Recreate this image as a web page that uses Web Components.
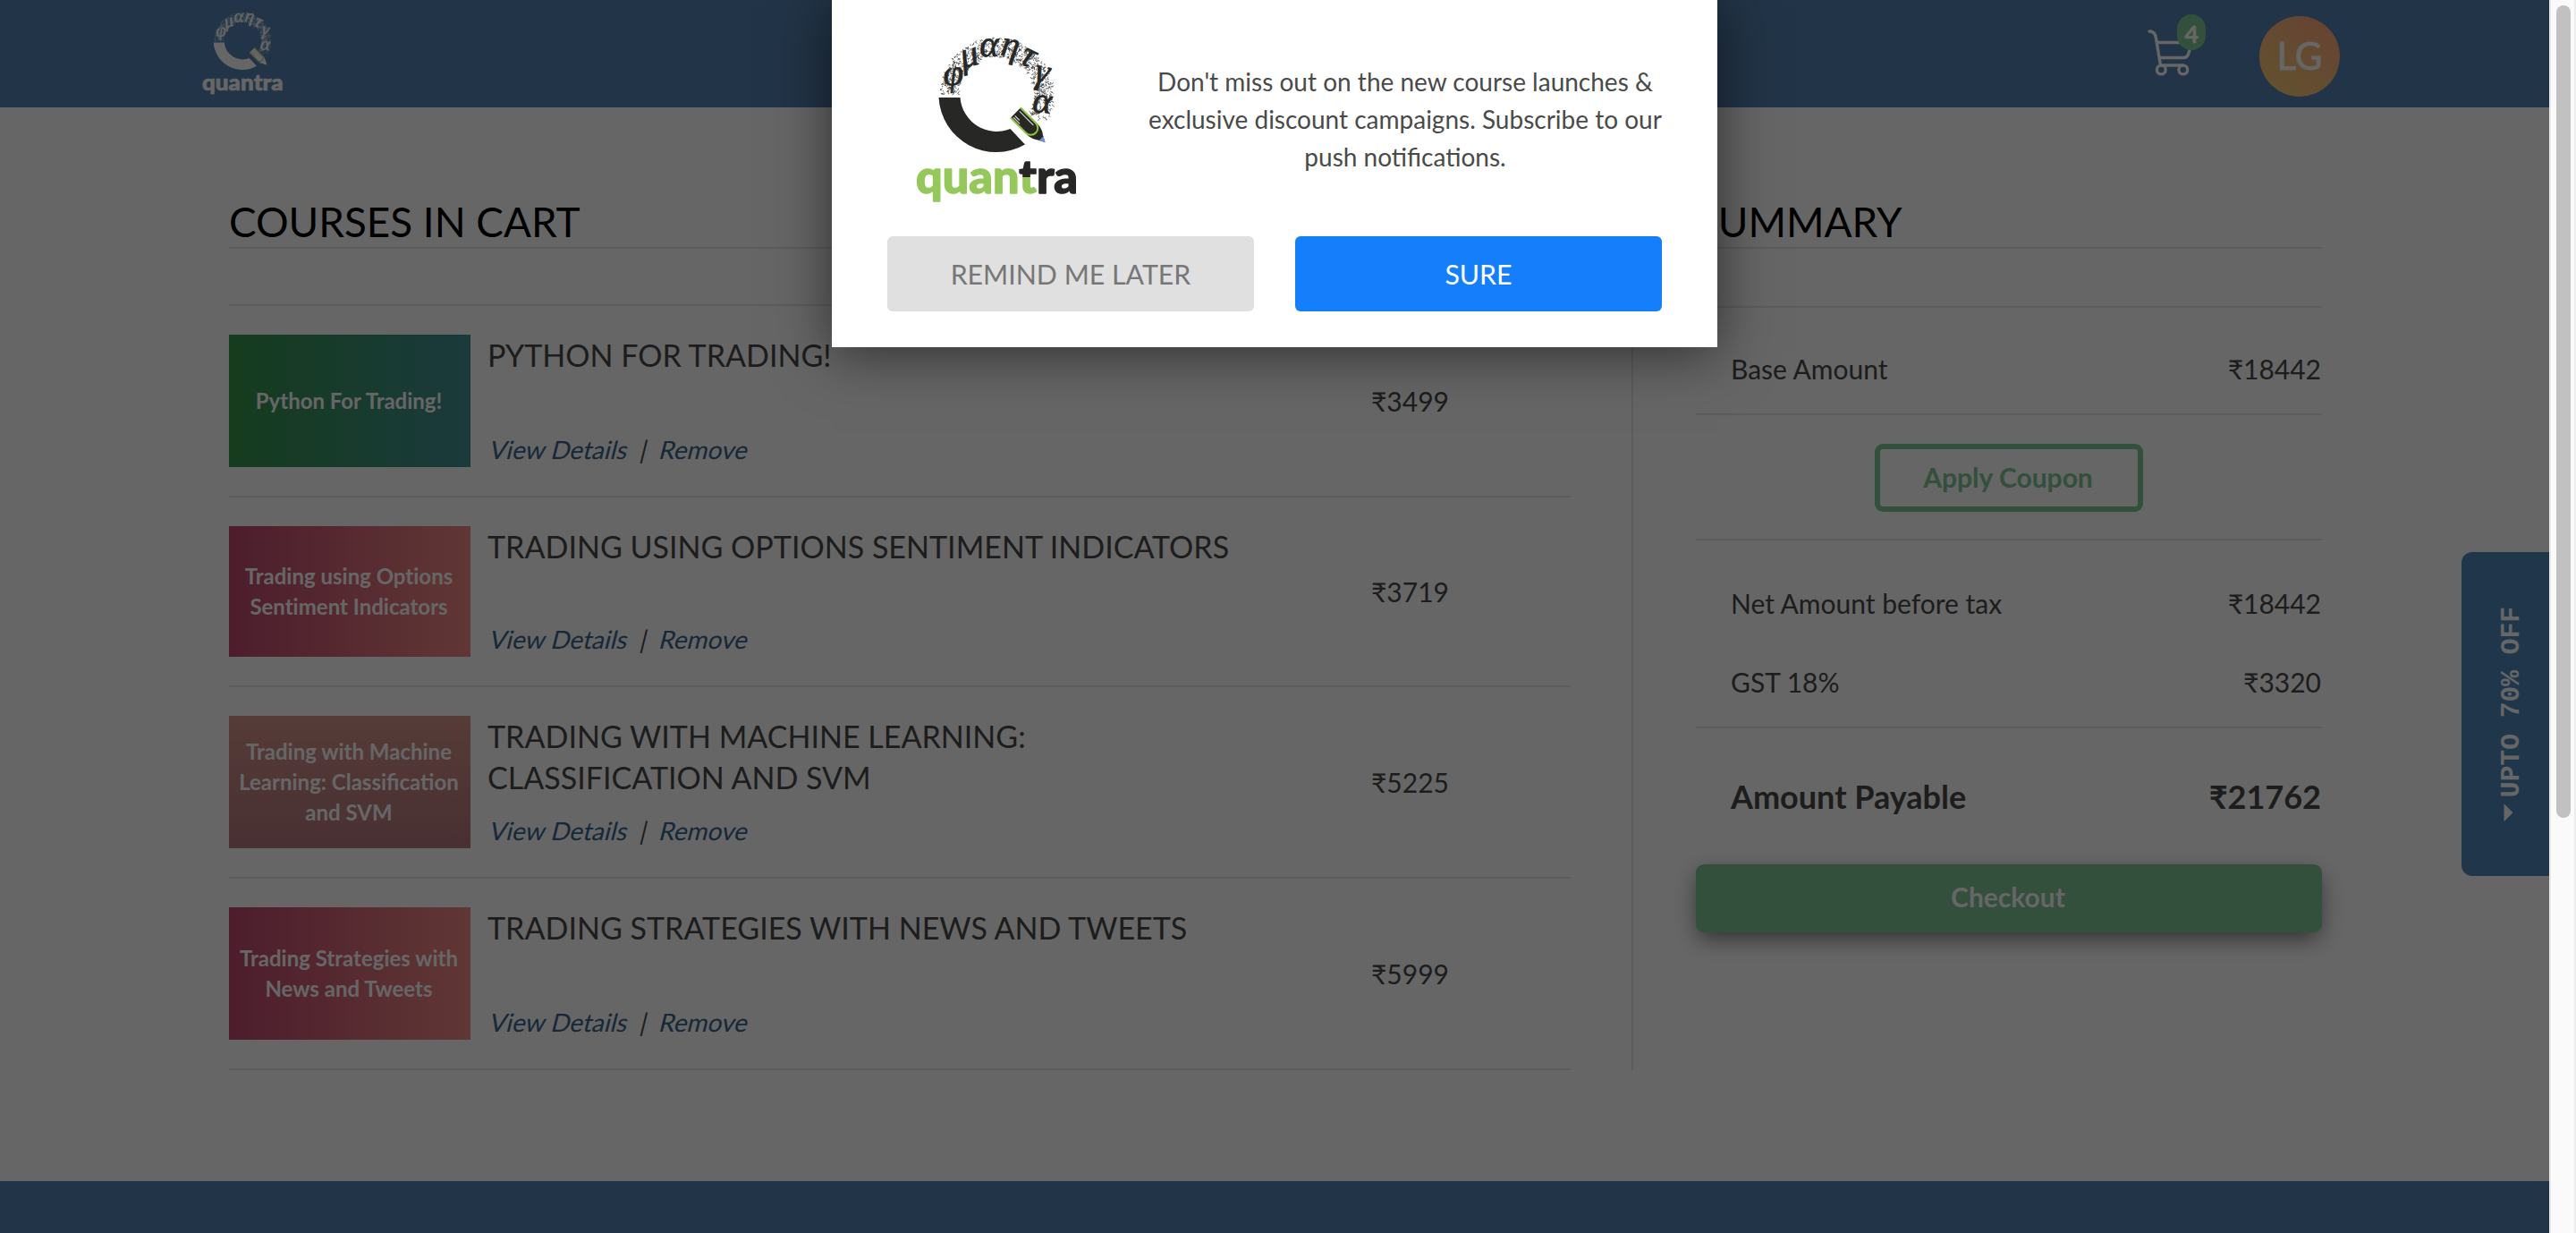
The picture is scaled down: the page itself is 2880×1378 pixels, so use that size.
<!DOCTYPE html>
<html lang="en">
<head>
<meta charset="utf-8">
<title>Quantra cart</title>
<style>
html,body{margin:0;height:100%;overflow:hidden;background:#fff}
body{font-family:Lato,"Liberation Sans",sans-serif;color:#494949}
</style>
</head>
<body>
<quantra-app></quantra-app>
<script>
const define=(name,html,setup)=>{
  const t=document.createElement('template');
  t.innerHTML=html;
  customElements.define(name,class extends HTMLElement{
    constructor(){super();this.attachShadow({mode:'open'}).append(t.content.cloneNode(true));}
    connectedCallback(){if(setup)setup(this,this.shadowRoot);}
  });
};

/* Brand mark: lettered ring, pencil and wordmark */
define('quantra-logo',`
<style>
:host{display:block;flex:none;--ink:#272725;--leaf:#95c85a;--tip:#6f8fd0}
:host([light]){--ink:#fff;--leaf:#fff;--tip:#fff}
svg{display:block;width:100%;height:100%;overflow:visible}
.g{font:italic 400 41px/1 "Liberation Serif",serif;fill:var(--ink);stroke:var(--ink);stroke-width:.7;text-anchor:middle}
.w{font:900 51px Lato,sans-serif;stroke-width:1.4;stroke-linejoin:round}
.i{fill:var(--ink);stroke:var(--ink)}.l{fill:var(--leaf);stroke:var(--leaf)}
</style>
<svg viewBox="-92 -70 184 192">
 <defs><linearGradient id="t" gradientUnits="userSpaceOnUse" x1="0" y1="72" x2="0" y2="112">
  <stop offset=".49" style="stop-color:var(--ink)"/><stop offset=".49" style="stop-color:var(--leaf)"/></linearGradient></defs>
 <path id="doodle" fill="none" style="stroke:var(--ink)" stroke-width=".6" stroke-linecap="round"/>
 <g class="g">
  <text transform="translate(-48,-20) rotate(-4)" y="9">φ</text>
  <text transform="translate(-30,-41) rotate(-14)" y="9">μ</text>
  <text transform="translate(-8,-52) rotate(-2)" y="9">α</text>
  <text transform="translate(15,-50) rotate(10)" y="7">η</text>
  <text transform="translate(35,-41) rotate(26)" y="9">τ</text>
  <text transform="translate(50,-18) rotate(12)" y="5">γ</text>
  <text transform="translate(51,11) rotate(4)" y="9">α</text>
 </g>
 <path style="fill:var(--ink)" d="M-64.5 3A64.5 64.5 0 0 0 32 55.5L15.5 38A41 41 0 0 1-40.5 3Z"/>
 <g transform="translate(21.5,20) rotate(45)">
  <path style="fill:var(--ink)" d="M0-8.4H28Q36-7 39-4L46.5 0L39 4Q36 7 28 8.4H0Z"/>
  <path style="fill:var(--tip)" d="M40.5-3.4L47 0L40.5 3.4Z"/>
  <path fill="none" stroke="#8cc63f" stroke-width="2" d="M0-7.8H24A7.8 7.8 0 0 1 24 7.8H0"/>
  <path fill="none" stroke="#c9c9c4" stroke-width="1.2" d="M2-4.2H24M2 3H9M2 5.4H12"/>
 </g>
 <text class="w" x="-90" y="109.500" textLength="181" lengthAdjust="spacingAndGlyphs"><tspan class="l">quan</tspan><tspan fill="url(#t)" stroke="url(#t)">t</tspan><tspan class="i">ra</tspan></text>
</svg>`,(el,r)=>{
  let s=7;const rnd=()=>(s=(s*16807)%2147483647)/2147483647;
  let d='';
  for(let i=0;i<760;i++){
    const a=(181+rnd()*208)*Math.PI/180,q=42.5+rnd()*21;
    const x=q*Math.cos(a),y=q*Math.sin(a),c=()=>((rnd()-.5)*4.6).toFixed(1);
    d+='M'+x.toFixed(1)+' '+y.toFixed(1)+'q'+c()+' '+c()+' '+c()+' '+c();
  }
  r.getElementById('doodle').setAttribute('d',d);
});

define('cart-button',`
<style>
:host{display:block;position:relative;width:66px;height:74px}
svg{display:block;width:66px;height:74px}
span{position:absolute;left:34px;top:0;width:32px;height:40px;border-radius:16px;background:#7dc894;color:#fff;
 font-weight:700;font-size:27px;line-height:44px;text-align:center;-webkit-text-stroke:.5px #fff}
</style>
<svg viewBox="2400 16 66 74" fill="none" stroke="#fff" stroke-width="3.4" stroke-linecap="round" stroke-linejoin="round">
<path d="M2403 35C2408 35 2410 38 2410.500 43L2415.500 73H2441"/><path d="M2412.500 47.500H2450L2448 56Q2446 64.500 2442 64.500H2415"/>
<circle cx="2416.300" cy="78" r="4.900"/><circle cx="2440.800" cy="78" r="4.900"/></svg>
<span><slot></slot></span>`);

define('user-avatar',`
<style>:host{display:block;width:90px;height:90px;border-radius:50%;background:linear-gradient(215deg,#ffa67f,#f5cf76);
color:#fff;font-size:42px;-webkit-text-stroke:.8px #fff;line-height:88px;text-align:center}</style><slot></slot>`);

define('site-header',`
<style>
:host{display:flex;height:120px;background:#5582b2;align-items:flex-start;justify-content:space-between;padding:0 234px 0 225px;box-sizing:border-box}
quantra-logo{width:92px;height:96px;margin-top:11px}
div{display:flex;gap:60px}
cart-button{margin-top:16px}user-avatar{margin-top:18px}
</style>
<quantra-logo light></quantra-logo>
<div><cart-button>4</cart-button><user-avatar>LG</user-avatar></div>`);

define('section-title',`
<style>:host{display:block;height:78px;box-sizing:border-box;color:#000;font-size:45.800px;line-height:96px;white-space:nowrap}</style><slot></slot>`);

define('course-row',`
<style>
:host{display:flex;height:var(--h,148px);padding:32px 0;border-bottom:2px solid #e5e5e5}
.thumb{width:270px;box-sizing:border-box;padding-right:2px;flex:none;background:var(--bg);color:#fff;font-weight:700;font-size:24px;line-height:34px;
 display:flex;align-items:center;justify-content:center;text-align:center;font-variant-ligatures:var(--liga,normal)}
.info{width:874px;flex:none;margin-left:19px;display:flex;flex-direction:column;justify-content:space-between;align-items:flex-start}
.name{font-size:34.060px;line-height:46px;text-transform:uppercase}
.links{font-size:28px;line-height:34px;margin-bottom:3px;padding-left:1px;white-space:pre;transform:skewX(-14deg);transform-origin:0 80%}
a{color:#3a648c}
.price{margin-left:114px;font-size:30px;align-self:center}
</style>
<div class="thumb"><slot name="thumb"></slot></div>
<div class="info"><div class="name"><slot></slot></div><div class="links"><a>View Details</a>  |  <a>Remove</a></div></div>
<div class="price"><slot name="price"></slot></div>`);

define('amount-row',`
<style>
:host{display:flex;justify-content:space-between;align-items:center;height:88px;padding:0 1px 0 39px;font-size:30px;white-space:nowrap}
:host([total]){font-size:36px;font-weight:700}
</style><slot></slot><slot name="value"></slot>`);

define('action-button',`
<style>
:host{display:flex;align-items:center;justify-content:center;box-sizing:border-box;height:76px;border-radius:9px;font-size:30px;font-weight:700;color:#7dc894;padding:0 2px 3px 0}
:host([kind=outline]){width:300px;border:6px solid #7dc894;margin:0 auto}
:host([kind=solid]){background:#7dc894;color:#fff;padding-bottom:4px;box-shadow:0 9px 26px -3px rgba(0,0,0,.55)}
</style><slot></slot>`);

define('cart-list',`
<style>
:host{display:block;width:1500px}
.rows{border-top:2px solid #e5e5e5;margin-top:62px}
.pink{--bg:linear-gradient(90deg,#c04970,#f08a84);--liga:none}
</style>
<div class="rows">
<course-row style="--bg:linear-gradient(90deg,#37964b,#419196)"><span slot="thumb">Python For Trading!</span>Python For Trading!<span slot="price">₹3499</span></course-row>
<course-row class="pink" style="--h:146px"><span slot="thumb">Trading using Options<br>Sentiment Indicators</span>Trading using Options Sentiment Indicators<span slot="price">₹3719</span></course-row>
<course-row style="--bg:linear-gradient(#d7968a,#b4787f)"><span slot="thumb">Trading with Machine<br>Learning: Classification<br>and SVM</span>Trading with Machine Learning: Classification and SVM<span slot="price">₹5225</span></course-row>
<course-row class="pink"><span slot="thumb">Trading Strategies with<br>News and Tweets</span>Trading Strategies with News and Tweets<span slot="price">₹5999</span></course-row>
</div>`);

define('order-summary',`
<style>
:host{display:block;width:700px;margin-top:64px}
section{border-top:2px solid #e5e5e5;box-sizing:border-box}
.base{height:120px;padding-top:24px}
.coupon{height:140px;padding-top:32px}
.tax{height:210px;padding-top:26px}
.pay{padding-top:32px}
.pay action-button{margin-top:32px}
</style>
<section class="base"><amount-row>Base Amount<span slot="value">₹18442</span></amount-row></section>
<section class="coupon"><action-button kind="outline">Apply Coupon</action-button></section>
<section class="tax"><amount-row>Net Amount before tax<span slot="value">₹18442</span></amount-row><amount-row>GST 18%<span slot="value">₹3320</span></amount-row></section>
<section class="pay"><amount-row total>Amount Payable<span slot="value">₹21762</span></amount-row><action-button kind="solid">Checkout</action-button></section>`);

define('cart-page',`
<style>
:host{display:block;box-sizing:border-box;padding:80px 254px 0 256px}
.heads,.cols{display:flex;justify-content:space-between}
.heads{background:linear-gradient(#e5e5e5,#e5e5e5) bottom/100% 2px no-repeat}
.heads section-title:last-child{width:700px}
.rule{width:2px;background:#e5e5e5;height:918px;margin-left:-2px}
</style>
<div class="heads"><section-title>COURSES IN CART</section-title><section-title>SUMMARY</section-title></div>
<div class="cols"><cart-list></cart-list><div class="rule"></div><order-summary></order-summary></div>`);

define('offer-tab',`
<style>
:host{position:absolute;right:0;top:617px;width:98px;height:362px;border-radius:12px 0 0 12px;background:#5088b9;color:#fff;
 display:flex;align-items:center;justify-content:center;box-sizing:border-box;padding-left:13px}
.t{writing-mode:vertical-rl;transform:rotate(180deg);display:flex;align-items:center;gap:7px;font:700 29.600px/34px "Liberation Mono",monospace;white-space:nowrap}
i{width:10px;height:20px;background:#fff;clip-path:polygon(100% 0,0 50%,100% 100%);margin-left:7px}
</style><div class="t"><i></i><span><slot></slot></span></div>`);

define('push-prompt',`
<style>
:host{position:absolute;left:930px;top:0;width:990px;height:388px;box-sizing:border-box;padding:36px 62px 40px;background:#fff;
 box-shadow:0 6px 60px rgba(0,0,0,.55);display:flex;flex-direction:column;justify-content:space-between}
.top{display:flex}
quantra-logo{width:184px;height:192px;margin-left:30px}
p{margin:34px 0 0 70px;width:590px;flex:none;font-size:28px;line-height:42px;text-align:center;color:#4a4a4a}
.btns{display:flex;gap:46px}
button{flex:1;height:84px;border:0;border-radius:6px;font:30.300px Lato,sans-serif;background:#e0e0e0;color:#777;padding:0}
button.yes{background:#157efb;color:#fff}
</style>
<div class="top"><quantra-logo></quantra-logo><p><slot></slot></p></div>
<div class="btns"><button>REMIND ME LATER</button><button class="yes">SURE</button></div>`);

define('scroll-bar',`
<style>:host{display:block;width:30px;height:100%;box-sizing:border-box;background:#fafafa;border-left:2px solid #e8e8e8;border-right:2px solid #ededed;padding:6px 4px 0 6px}
div{height:908px;border-radius:8px;background:#c1c1c1}</style><div></div>`);

define('quantra-app',`
<style>
:host{display:flex;width:2880px;height:1378px;overflow:hidden}
main{position:relative;width:2850px;height:1378px;overflow:hidden;background:#fff}
cart-page{height:1200px}
footer{height:58px;background:#5582b2}
.shade{position:absolute;inset:0;background:rgba(0,0,0,.6)}
</style>
<main>
<site-header></site-header><cart-page></cart-page><footer></footer>
<offer-tab>UPTO 70% OFF</offer-tab>
<div class="shade"></div>
<push-prompt>Don't miss out on the new course launches &amp; exclusive discount campaigns. Subscribe to our push notifications.</push-prompt>
</main><scroll-bar></scroll-bar>`);
</script>
</body>
</html>
